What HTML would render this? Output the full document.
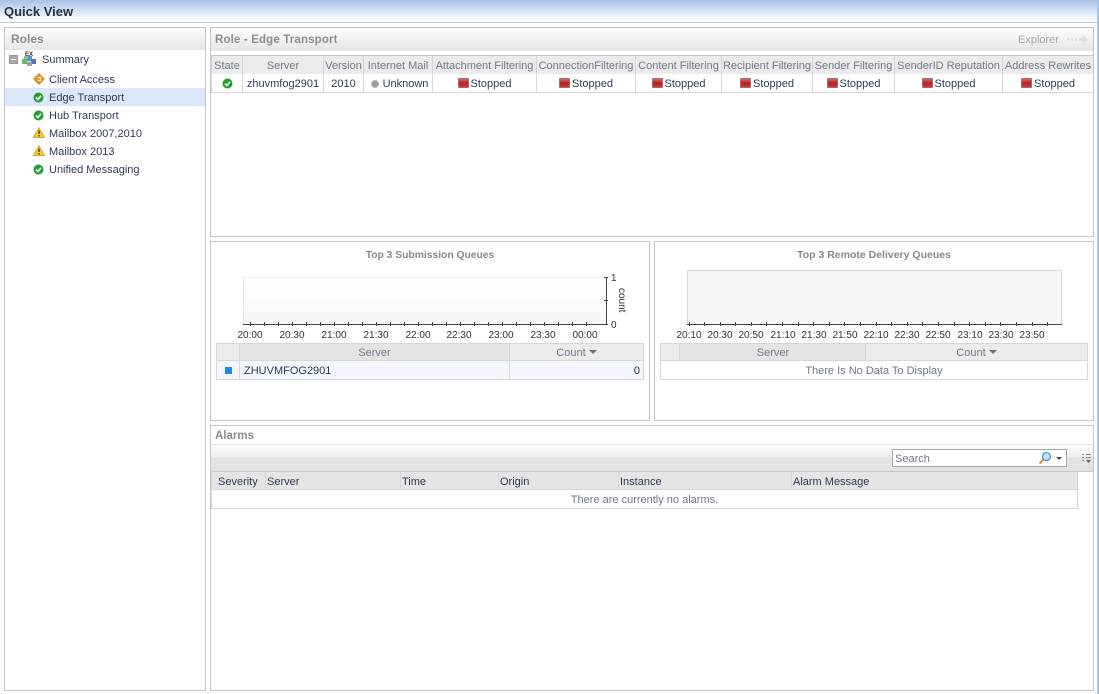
<!DOCTYPE html>
<html><head><meta charset="utf-8"><style>
html,body{margin:0;padding:0;background:#fff}
#p{position:relative;width:1099px;height:694px;overflow:hidden;background:#fff;font:11px/14px "Liberation Sans",sans-serif;color:#2e3a55}
#p div,#p svg{position:absolute;box-sizing:border-box}
.t{white-space:nowrap;transform:translateY(1px)}
.panel{border:1px solid #c4c6c8;background:#fff}
.hd{background:linear-gradient(#fdfdfd,#e6e6e6)}
.th{background:#ebebeb;color:#70788a;text-align:center;border-right:1px solid #d6d6d6;height:18px;line-height:20px;white-space:nowrap;top:0}
.td{color:#2e3a55;text-align:center;border-right:1px solid #d6d6d6;height:18px;line-height:20px;white-space:nowrap;top:18px}
.stop{display:inline-block;width:11px;height:10px;background:linear-gradient(#d96a6a,#b52020 50%,#c83a3a);border:1px solid #a86a6a;border-radius:1px;vertical-align:-1px;margin-right:2px;box-sizing:border-box}
.lbl{font-size:10px;color:#333;line-height:12px;white-space:nowrap;text-align:center;width:40px;transform:translateY(1px)}
</style></head><body><div id="p">

<!-- top bar -->
<div style="left:0;top:0;width:1099px;height:23px;background:linear-gradient(#a9c3e6,#dfe9f6 60%,#fff);border-bottom:1px solid #c4c6c8"></div>
<div class="t" style="left:4px;top:3px;font-size:13px;font-weight:bold;color:#26303f;line-height:16px">Quick View</div>
<div style="left:1097px;top:0;width:2px;height:694px;background:#a9c3e6"></div>

<!-- roles -->
<div class="panel" style="left:4px;top:27px;width:202px;height:664px"></div>
<div class="hd" style="left:5px;top:28px;width:200px;height:22px"></div>
<div class="t" style="left:11px;top:31px;font-weight:bold;font-size:12px;color:#8a8d92">Roles</div>
<div style="left:5px;top:88px;width:200px;height:18px;background:#dbe8fb"></div>

<div style="left:9px;top:55px;width:9px;height:9px;background:#a9a9a9;border:1px solid #999"></div>
<div style="left:11px;top:59px;width:5px;height:1px;background:#fff"></div>
<svg style="left:21px;top:51px" width="16" height="16" viewBox="0 0 16 16">
<rect x="1" y="8" width="5" height="5" fill="#6cb85c"/><rect x="6" y="5" width="5" height="5" fill="#5f8fd0"/><rect x="10" y="8" width="5" height="5" fill="#5f6fc8"/><rect x="6" y="11" width="5" height="4" fill="#9aa0a8"/><rect x="3" y="5" width="4" height="3" fill="#8cc87c"/>
<text x="4" y="5" font-size="6" font-weight="bold" fill="#333" font-family="Liberation Sans">EX</text></svg>
<div class="t" style="left:42px;top:52px">Summary</div>

<svg style="left:33px;top:73px" width="12" height="12" viewBox="0 0 12 12"><path d="M6 0L12 6L6 12L0 6Z" fill="#ee8a1e"/><path d="M4.500 4.500H7.500V7.500H5" fill="none" stroke="#fff" stroke-width="1.200"/></svg>
<div class="t" style="left:49px;top:72px">Client Access</div>

<svg style="left:33px;top:92px" width="11" height="11" viewBox="0 0 11 11"><circle cx="5.500" cy="5.500" r="5" fill="#1fa032"/><path d="M3 5.500L5 7.500L8 3.800" fill="none" stroke="#fff" stroke-width="1.600"/></svg>
<div class="t" style="left:49px;top:90px">Edge Transport</div>

<svg style="left:33px;top:110px" width="11" height="11" viewBox="0 0 11 11"><circle cx="5.500" cy="5.500" r="5" fill="#1fa032"/><path d="M3 5.500L5 7.500L8 3.800" fill="none" stroke="#fff" stroke-width="1.600"/></svg>
<div class="t" style="left:49px;top:108px">Hub Transport</div>

<svg style="left:33px;top:127px" width="12" height="11" viewBox="0 0 12 11"><path d="M6 .5L11.700 10.500H.3Z" fill="#f6c92c" stroke="#c9971a" stroke-width=".7"/><path d="M6 3.500V7M6 8V9.500" stroke="#333" stroke-width="1.300"/></svg>
<div class="t" style="left:49px;top:126px">Mailbox 2007,2010</div>

<svg style="left:33px;top:145px" width="12" height="11" viewBox="0 0 12 11"><path d="M6 .5L11.700 10.500H.3Z" fill="#f6c92c" stroke="#c9971a" stroke-width=".7"/><path d="M6 3.500V7M6 8V9.500" stroke="#333" stroke-width="1.300"/></svg>
<div class="t" style="left:49px;top:144px">Mailbox 2013</div>

<svg style="left:33px;top:164px" width="11" height="11" viewBox="0 0 11 11"><circle cx="5.500" cy="5.500" r="5" fill="#1fa032"/><path d="M3 5.500L5 7.500L8 3.800" fill="none" stroke="#fff" stroke-width="1.600"/></svg>
<div class="t" style="left:49px;top:162px">Unified Messaging</div>

<!-- role panel -->
<div class="panel" style="left:210px;top:27px;width:884px;height:210px"></div>
<div class="hd" style="left:211px;top:28px;width:882px;height:23px"></div>
<div class="t" style="left:215px;top:32px;font-weight:bold;font-size:11.5px;letter-spacing:.15px;color:#8a8d92">Role - Edge Transport</div>
<div class="t" style="left:1018px;top:32px;color:#a8a8a8">Explorer</div>
<svg style="left:1066px;top:34px" width="22" height="11" viewBox="0 0 22 11"><path d="M1 5.500H3M5 5.500H7M9 5.500H11" stroke="#ddd" stroke-width="2"/><path d="M13 4H17V1L22 5.500L17 10V7H13Z" fill="#ddd"/></svg>

<div style="left:211px;top:55px;width:882px;height:38px;border-top:1px solid #c4c6c8;border-bottom:1px solid #d6d6d6;border-left:1px solid #d6d6d6">
<div style="left:0;top:0;width:881px;height:18px;background:#ebebeb"></div>
<div class="th" style="left:0;width:31px">State</div>
<div class="th" style="left:31px;width:81px">Server</div>
<div class="th" style="left:112px;width:40px">Version</div>
<div class="th" style="left:152px;width:69px">Internet Mail</div>
<div class="th" style="left:221px;width:104px">Attachment Filtering</div>
<div class="th" style="left:325px;width:99px">ConnectionFiltering</div>
<div class="th" style="left:424px;width:86px">Content Filtering</div>
<div class="th" style="left:510px;width:91px">Recipient Filtering</div>
<div class="th" style="left:601px;width:82px">Sender Filtering</div>
<div class="th" style="left:683px;width:108px">SenderID Reputation</div>
<div class="th" style="left:791px;width:90px;border-right:0">Address Rewrites</div>

<div class="td" style="left:0;width:31px"></div>
<div class="td" style="left:31px;width:81px">zhuvmfog2901</div>
<div class="td" style="left:112px;width:40px">2010</div>
<div class="td" style="left:152px;width:69px;padding-left:3px"><span style="display:inline-block;width:8px;height:8px;border-radius:50%;background:#9a9a9a;border:1px solid #bbb;box-sizing:border-box;vertical-align:-1px;margin-right:4px"></span>Unknown</div>
<div class="td" style="left:221px;width:104px"><span class="stop"></span>Stopped</div>
<div class="td" style="left:325px;width:99px"><span class="stop"></span>Stopped</div>
<div class="td" style="left:424px;width:86px"><span class="stop"></span>Stopped</div>
<div class="td" style="left:510px;width:91px"><span class="stop"></span>Stopped</div>
<div class="td" style="left:601px;width:82px"><span class="stop"></span>Stopped</div>
<div class="td" style="left:683px;width:108px"><span class="stop"></span>Stopped</div>
<div class="td" style="left:791px;width:90px;border-right:0"><span class="stop"></span>Stopped</div>
</div>
<svg style="left:222px;top:78px" width="11" height="11" viewBox="0 0 11 11"><circle cx="5.500" cy="5.500" r="5" fill="#1fa032"/><path d="M3 5.500L5 7.500L8 3.800" fill="none" stroke="#fff" stroke-width="1.600"/></svg>

<!-- chart panel 1 -->
<div class="panel" style="left:210px;top:241px;width:440px;height:180px"></div>
<div class="t" style="left:211px;top:248px;width:438px;text-align:center;font-weight:bold;font-size:10.3px;color:#85888e">Top 3 Submission Queues</div>
<div style="left:243px;top:277px;width:363px;height:48px;background:linear-gradient(#fff,#f6f7fa);border-left:1px solid #e2e4ea;border-top:1px solid #eceef2"></div>
<svg style="left:238px;top:272px" width="395" height="60" viewBox="0 0 395 60">
<path d="M5 52.500H369M368.500 5V52.500M366 5.500H370M366 28.500H370M362 52.500H370" stroke="#444" fill="none"/>
<path d="M12.500 50V54M26.500 50V54M40.500 50V54M54.500 50V54M68.500 50V54M82.500 50V54M96.500 50V54M110.500 50V54M124.500 50V54M138.500 50V54M152.500 50V54M166.500 50V54M180.500 50V54M194.500 50V54M208.500 50V54M222.500 50V54M236.500 50V54M250.500 50V54M264.500 50V54M278.500 50V54M292.500 50V54M306.500 50V54M320.500 50V54M334.500 50V54M348.500 50V54" stroke="#444"/>
<text x="373" y="9" font-size="10" fill="#333" font-family="Liberation Sans">1</text>
<text x="373" y="56" font-size="10" fill="#333" font-family="Liberation Sans">0</text>
<text transform="translate(381,16) rotate(90)" font-size="10" fill="#333" font-family="Liberation Sans">count</text>
</svg>
<div class="lbl" style="left:230px;top:329px">20:00</div>
<div class="lbl" style="left:272px;top:329px">20:30</div>
<div class="lbl" style="left:314px;top:329px">21:00</div>
<div class="lbl" style="left:356px;top:329px">21:30</div>
<div class="lbl" style="left:398px;top:329px">22:00</div>
<div class="lbl" style="left:439px;top:329px">22:30</div>
<div class="lbl" style="left:481px;top:329px">23:00</div>
<div class="lbl" style="left:523px;top:329px">23:30</div>
<div class="lbl" style="left:565px;top:329px">00:00</div>

<div style="left:216px;top:343px;width:428px;height:37px;border:1px solid #d6d6d6;background:#f3f7fc">
<div style="left:0;top:0;width:426px;height:17px;background:#ebebeb;border-bottom:1px solid #d6d6d6"></div>
<div style="left:22px;top:0;width:1px;height:35px;background:#d6d6d6"></div>
<div style="left:292px;top:0;width:1px;height:35px;background:#d6d6d6"></div>
<div style="left:23px;top:0;width:269px;height:17px;background:#e4e4e4;border-bottom:1px solid #d6d6d6"></div>
<div class="t" style="left:23px;top:1px;width:269px;text-align:center;color:#70788a">Server</div>
<div class="t" style="left:293px;top:1px;width:133px;text-align:center;color:#70788a">Count <span style="display:inline-block;border:4px solid transparent;border-top:4px solid #6a7080;border-bottom:0;vertical-align:2px"></span></div>
<div style="left:8px;top:23px;width:7px;height:7px;background:#1e88ee"></div>
<div class="t" style="left:27px;top:19px;color:#2e3a55">ZHUVMFOG2901</div>
<div class="t" style="left:293px;top:19px;width:130px;text-align:right;color:#2e3a55">0</div>
</div>

<!-- chart panel 2 -->
<div class="panel" style="left:654px;top:241px;width:440px;height:180px"></div>
<div class="t" style="left:655px;top:247px;width:438px;text-align:center;font-weight:bold;font-size:10.5px;color:#85888e">Top 3 Remote Delivery Queues</div>
<div style="left:687px;top:270px;width:375px;height:55px;background:#f7f8fa;border:1px solid #d6d6d6;border-bottom:0"></div>
<svg style="left:684px;top:320px" width="380" height="10" viewBox="0 0 380 10">
<path d="M3 4.500H378" stroke="#444"/>
<path d="M5.500 2V6M20.500 2V6M36.500 2V6M51.500 2V6M67.500 2V6M82.500 2V6M98.500 2V6M114.500 2V6M129.500 2V6M145.500 2V6M160.500 2V6M176.500 2V6M192.500 2V6M207.500 2V6M223.500 2V6M238.500 2V6M254.500 2V6M270.500 2V6M285.500 2V6M301.500 2V6M316.500 2V6M332.500 2V6M348.500 2V6M363.500 2V6" stroke="#444"/></svg>
<div class="lbl" style="left:669px;top:329px">20:10</div>
<div class="lbl" style="left:700px;top:329px">20:30</div>
<div class="lbl" style="left:731px;top:329px">20:50</div>
<div class="lbl" style="left:763px;top:329px">21:10</div>
<div class="lbl" style="left:794px;top:329px">21:30</div>
<div class="lbl" style="left:825px;top:329px">21:50</div>
<div class="lbl" style="left:856px;top:329px">22:10</div>
<div class="lbl" style="left:887px;top:329px">22:30</div>
<div class="lbl" style="left:918px;top:329px">22:50</div>
<div class="lbl" style="left:950px;top:329px">23:10</div>
<div class="lbl" style="left:981px;top:329px">23:30</div>
<div class="lbl" style="left:1012px;top:329px">23:50</div>

<div style="left:660px;top:343px;width:428px;height:37px;border:1px solid #d6d6d6;background:#fff">
<div style="left:0;top:0;width:426px;height:17px;background:#ebebeb;border-bottom:1px solid #d6d6d6"></div>
<div style="left:18px;top:0;width:1px;height:17px;background:#d6d6d6"></div>
<div style="left:19px;top:0;width:186px;height:17px;background:#e4e4e4;border-bottom:1px solid #d6d6d6;border-right:1px solid #d6d6d6"></div>
<div class="t" style="left:19px;top:1px;width:186px;text-align:center;color:#70788a">Server</div>
<div class="t" style="left:205px;top:1px;width:221px;text-align:center;color:#70788a">Count <span style="display:inline-block;border:4px solid transparent;border-top:4px solid #6a7080;border-bottom:0;vertical-align:2px"></span></div>
<div class="t" style="left:0;top:19px;width:426px;text-align:center;color:#70788a">There Is No Data To Display</div>
</div>

<!-- alarms -->
<div class="panel" style="left:210px;top:425px;width:884px;height:266px"></div>
<div class="t" style="left:215px;top:428px;font-weight:bold;font-size:11.5px;color:#8a8d92">Alarms</div>
<div style="left:211px;top:444px;width:882px;height:28px;border-top:1px solid #e2e2e2;border-bottom:1px solid #c8c8c8;background:linear-gradient(#fdfdfd,#efefef 46%,#e3e3e3 48%,#e3e3e3)"></div>
<div style="left:892px;top:449px;width:175px;height:18px;background:#fff;border:1px solid #a6a6a6"></div>
<div class="t" style="left:895px;top:451px;color:#70788a">Search</div>
<svg style="left:1038px;top:451px" width="15" height="14" viewBox="0 0 15 14"><circle cx="8.500" cy="5.500" r="4" fill="#bfe3fb" stroke="#4a90d0" stroke-width="1.200"/><path d="M5.500 8.500L1.500 12.500" stroke="#e08a2a" stroke-width="2"/></svg>
<div style="left:1056px;top:457px;border:3px solid transparent;border-top:3px solid #444;border-bottom:0"></div>
<svg style="left:1081px;top:453px" width="11" height="11" viewBox="0 0 11 11"><path d="M1 1.500H3M5 1.500H10M1 4.500H3M5 4.500H10M1 7.500H3" stroke="#8a8a8a"/><path d="M5 7H10L7.500 10Z" fill="#666"/></svg>

<div style="left:211px;top:472px;width:867px;height:37px;border:1px solid #d6d6d6;border-top:0;background:#fff">
<div style="left:0;top:0;width:865px;height:18px;background:#e5e5e5;border-bottom:1px solid #d6d6d6"></div>
<div class="t" style="left:6px;top:2px;">Severity</div>
<div style="left:53px;top:0;width:1px;height:17px;background:#d6d6d6"></div>
<div class="t" style="left:55px;top:2px">Server</div>
<div style="left:188px;top:0;width:1px;height:17px;background:#d6d6d6"></div>
<div class="t" style="left:190px;top:2px">Time</div>
<div style="left:286px;top:0;width:1px;height:17px;background:#d6d6d6"></div>
<div class="t" style="left:288px;top:2px">Origin</div>
<div style="left:406px;top:0;width:1px;height:17px;background:#d6d6d6"></div>
<div class="t" style="left:408px;top:2px">Instance</div>
<div style="left:579px;top:0;width:1px;height:17px;background:#d6d6d6"></div>
<div class="t" style="left:581px;top:2px">Alarm Message</div>
<div class="t" style="left:0;top:20px;width:865px;text-align:center;color:#70788a">There are currently no alarms.</div>
</div>

</div></body></html>
